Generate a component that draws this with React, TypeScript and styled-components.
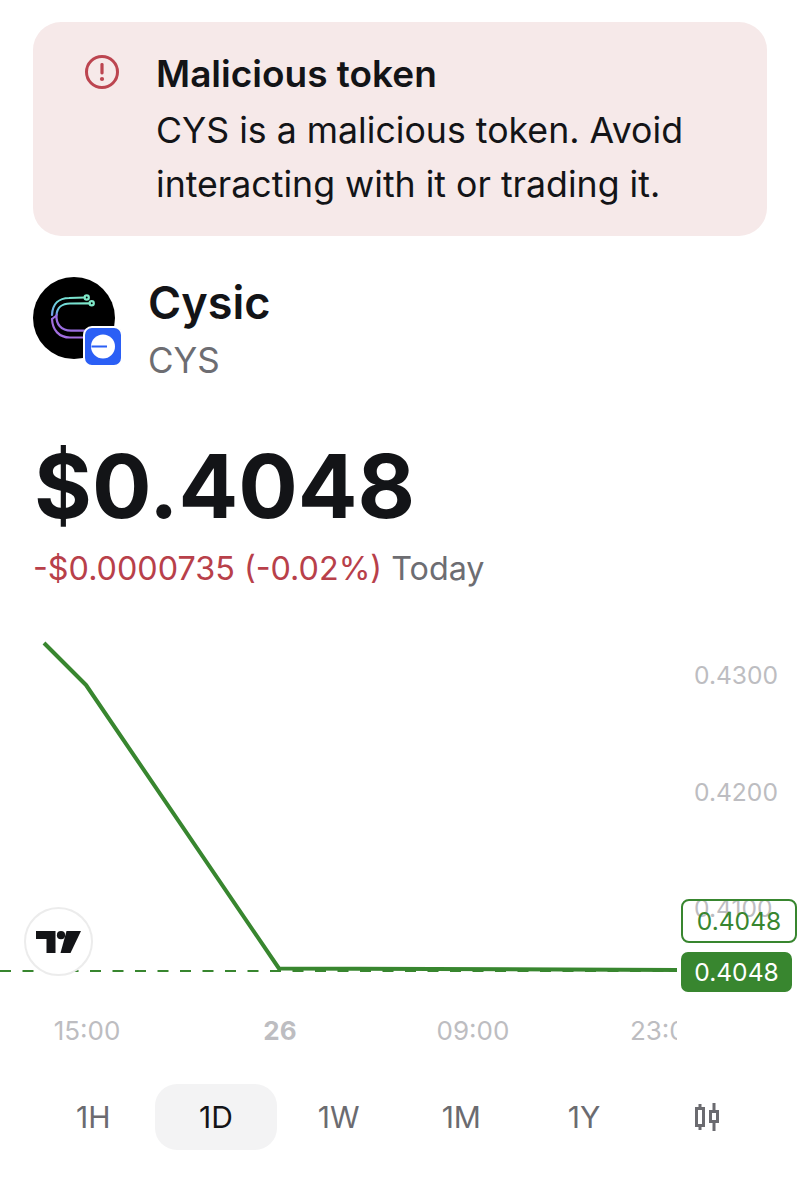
import React from 'react';
import styled, { createGlobalStyle } from 'styled-components';

const GREEN = '#38862f';
const PRICE_LABELS = [
  { text: '0.4300', y: 55 },
  { text: '0.4200', y: 172 },
  { text: '0.4100', y: 288 },
];
const TIME_LABELS = [
  { text: '15:00', x: 87, bold: false },
  { text: '26', x: 280, bold: true },
  { text: '09:00', x: 473, bold: false },
  { text: '23:00', x: 666, bold: false },
];
const RANGES = ['1H', '1D', '1W', '1M', '1Y'];

const App: React.FC = () => {
  return (
    <Page>
      <GlobalStyle />
      <Banner>
        <BannerIcon viewBox="0 0 36 36">
          <circle cx="18" cy="18" r="15.5" fill="none" stroke="#bc4550" strokeWidth="3" />
          <rect x="16.4" y="9" width="3.2" height="11.5" rx="1.4" fill="#bc4550" />
          <circle cx="18" cy="25" r="2.1" fill="#bc4550" />
        </BannerIcon>
        <BannerText>
          <BannerTitle>Malicious token</BannerTitle>
          <BannerBody>CYS is a malicious token. Avoid interacting with it or trading it.</BannerBody>
        </BannerText>
      </Banner>

      <TokenRow>
        <LogoWrap>
          <TokenLogo viewBox="0 0 82 82">
            <defs>
              <linearGradient id="cyan" x1="0" y1="1" x2="1" y2="0">
                <stop offset="0" stopColor="#6f9fe8" />
                <stop offset="0.45" stopColor="#6fd8dc" />
                <stop offset="1" stopColor="#7fe8c8" />
              </linearGradient>
            </defs>
            <circle cx="41" cy="41" r="41" fill="#000" />
            <g fill="none" strokeWidth="2.2" strokeLinecap="round">
              <path d="M19 38 C19.5 27 26 21 36 21 L51.5 20.5" stroke="url(#cyan)" />
              <path d="M23.5 38 C24 31 29 26.5 37 26.5 L56.5 26.3" stroke="url(#cyan)" />
              <circle cx="53.7" cy="20.5" r="2.1" stroke="#7fe8c8" />
              <circle cx="58.7" cy="26.3" r="2.1" stroke="#7fe8c8" />
              <path d="M19 42 C19.5 53 26 60.5 37 60.5 L52 60.5" stroke="#a36fe0" />
              <path d="M19 42 L23.5 38.5 C23 47 28 53.7 38 53.7 L52 53.7" stroke="#9a6ee0" />
            </g>
          </TokenLogo>
          <ChainBadge viewBox="0 0 40 41">
            <rect x="1" y="1" width="38" height="39" rx="8" fill="#2b5ff5" stroke="#fff" strokeWidth="2" />
            <circle cx="20" cy="20.5" r="12" fill="#fff" />
            <rect x="8.5" y="19.5" width="15.5" height="2" fill="#2b5ff5" />
          </ChainBadge>
        </LogoWrap>
        <TokenNames>
          <TokenName>Cysic</TokenName>
          <TokenSymbol>CYS</TokenSymbol>
        </TokenNames>
      </TokenRow>

      <Price>$0.4048</Price>
      <Change>
        <ChangeValue>-$0.0000735 (-0.02%)</ChangeValue> Today
      </Change>

      <Chart>
        <ChartLines viewBox="0 0 800 440">
          <line x1="0" y1="351" x2="677" y2="351" stroke={GREEN} strokeWidth="2" strokeDasharray="11 11.5" />
          <polyline
            points="44,23 86,65 279,348.5 677,350"
            fill="none"
            stroke={GREEN}
            strokeWidth="4"
            strokeLinejoin="round"
          />
        </ChartLines>

        {PRICE_LABELS.map((label) => (
          <PriceLabel key={label.text} $y={label.y}>
            {label.text}
          </PriceLabel>
        ))}

        <OutlineTag>0.4048</OutlineTag>
        <FilledTag>0.4048</FilledTag>

        <ViewLogo>
          <svg viewBox="0 0 46 22" width="46" height="22">
            <path d="M0 0 H19.5 V22 H10.5 V8 H0 Z" fill="#131417" />
            <circle cx="25" cy="4.2" r="4.1" fill="#131417" />
            <path d="M30.5 0 H45 L34.5 22 H24.5 Z" fill="#131417" />
          </svg>
        </ViewLogo>

        <TimeAxis>
          {TIME_LABELS.map((label) => (
            <TimeLabel key={label.text} $x={label.x} $bold={label.bold}>
              {label.text}
            </TimeLabel>
          ))}
        </TimeAxis>
      </Chart>

      <RangeBar>
        {RANGES.map((range) => (
          <RangeButton key={range} $active={range === '1D'}>
            {range}
          </RangeButton>
        ))}
        <RangeButton $active={false}>
          <svg viewBox="0 0 26 28" width="26" height="28" fill="none" stroke="#6b6b70" strokeWidth="3">
            <rect x="2.5" y="5.5" width="7" height="17" />
            <path d="M6 1 V5 M6 23 V27" />
            <rect x="16.5" y="8.5" width="7" height="10" />
            <path d="M20 0 V8 M20 19 V28" />
          </svg>
        </RangeButton>
      </RangeBar>
    </Page>
  );
};

export default App;

const GlobalStyle = createGlobalStyle`
  html, body {
    margin: 0;
    padding: 0;
    background: #fff;
  }
`;

const Page = styled.div`
  width: 800px;
  height: 1200px;
  padding-top: 22px;
  box-sizing: border-box;
  overflow: hidden;

  font-family: 'Inter', sans-serif;
  color: #131417;
`;

const Banner = styled.div`
  margin: 0 33px;
  height: 214px;
  padding: 30px 40px 0 51px;
  box-sizing: border-box;
  border-radius: 28px;
  background: #f6e9e9;

  display: flex;
  gap: 36px;
`;

const BannerIcon = styled.svg`
  width: 36px;
  height: 36px;
  margin-top: 2px;
  flex-shrink: 0;
`;

const BannerText = styled.div`
  display: flex;
  flex-direction: column;
`;

const BannerTitle = styled.div`
  font-weight: 600;
  font-size: 37px;
  line-height: 44px;
`;

const BannerBody = styled.div`
  font-weight: 400;
  font-size: 35.7px;
  line-height: 54px;
  margin-top: 7px;
`;

const TokenRow = styled.div`
  margin: 41px 33px 0;
  display: flex;
  gap: 33px;
`;

const LogoWrap = styled.div`
  position: relative;
  width: 82px;
  height: 82px;
`;

const TokenLogo = styled.svg`
  width: 82px;
  height: 82px;
  display: block;
`;

const ChainBadge = styled.svg`
  position: absolute;
  left: 50px;
  top: 49px;
  width: 40px;
  height: 41px;
`;

const TokenNames = styled.div`
  display: flex;
  flex-direction: column;
`;

const TokenName = styled.div`
  font-weight: 600;
  font-size: 45px;
  line-height: 52px;
`;

const TokenSymbol = styled.div`
  margin-top: 5px;
  font-size: 35px;
  line-height: 52px;
  color: #6d6d72;
`;

const Price = styled.div`
  margin: 50px 0 0 34px;
  font-weight: 700;
  font-size: 88.4px;
  line-height: 100px;
`;

const Change = styled.div`
  margin: 13px 0 0 33px;
  font-size: 32.3px;
  line-height: 40px;
  color: #6d6d72;
`;

const ChangeValue = styled.span`
  color: #b8404a;
`;

const Chart = styled.div`
  position: relative;
  margin-top: 31px;
  height: 440px;
`;

const ChartLines = styled.svg`
  position: absolute;
  inset: 0;
  width: 800px;
  height: 440px;
`;

const PriceLabel = styled.span<{ $y: number }>`
  position: absolute;
  left: 694px;
  top: ${(p) => p.$y - 15}px;
  font-size: 24.6px;
  line-height: 30px;
  color: #bdbdc1;
`;

const OutlineTag = styled.div`
  position: absolute;
  left: 681px;
  top: 279px;
  width: 116px;
  height: 44px;
  box-sizing: border-box;
  border: 2px solid ${GREEN};
  border-radius: 8px;
  font-size: 24.6px;
  line-height: 40px;
  text-align: center;
  color: ${GREEN};
`;

const FilledTag = styled.div`
  position: absolute;
  left: 681px;
  top: 332px;
  width: 111px;
  height: 40px;
  border-radius: 7px;
  background: ${GREEN};
  font-size: 24.6px;
  line-height: 40px;
  text-align: center;
  color: #fff;
`;

const ViewLogo = styled.div`
  position: absolute;
  left: 24px;
  top: 287px;
  width: 69px;
  height: 69px;
  box-sizing: border-box;
  border: 2px solid #ececec;
  border-radius: 50%;
  background: #fff;

  display: flex;
  align-items: center;
  justify-content: center;
`;

const TimeAxis = styled.div`
  position: absolute;
  left: 0;
  top: 396px;
  width: 677px;
  height: 30px;
  overflow: hidden;
`;

const TimeLabel = styled.span<{ $x: number; $bold: boolean }>`
  position: absolute;
  left: ${(p) => p.$x}px;
  top: 0;
  transform: translateX(-50%);
  font-size: 26px;
  line-height: 30px;
  font-weight: ${(p) => (p.$bold ? 700 : 400)};
  color: #bdbdc1;
`;

const RangeBar = styled.div`
  margin: 24px 32px 0;
  display: grid;
  grid-template-columns: repeat(6, 1fr);
`;

const RangeButton = styled.div<{ $active: boolean }>`
  height: 66px;
  border-radius: 22px;
  background: ${(p) => (p.$active ? '#f3f3f4' : 'transparent')};
  color: ${(p) => (p.$active ? '#131417' : '#6b6b70')};
  font-size: 30px;

  display: flex;
  align-items: center;
  justify-content: center;
`;
